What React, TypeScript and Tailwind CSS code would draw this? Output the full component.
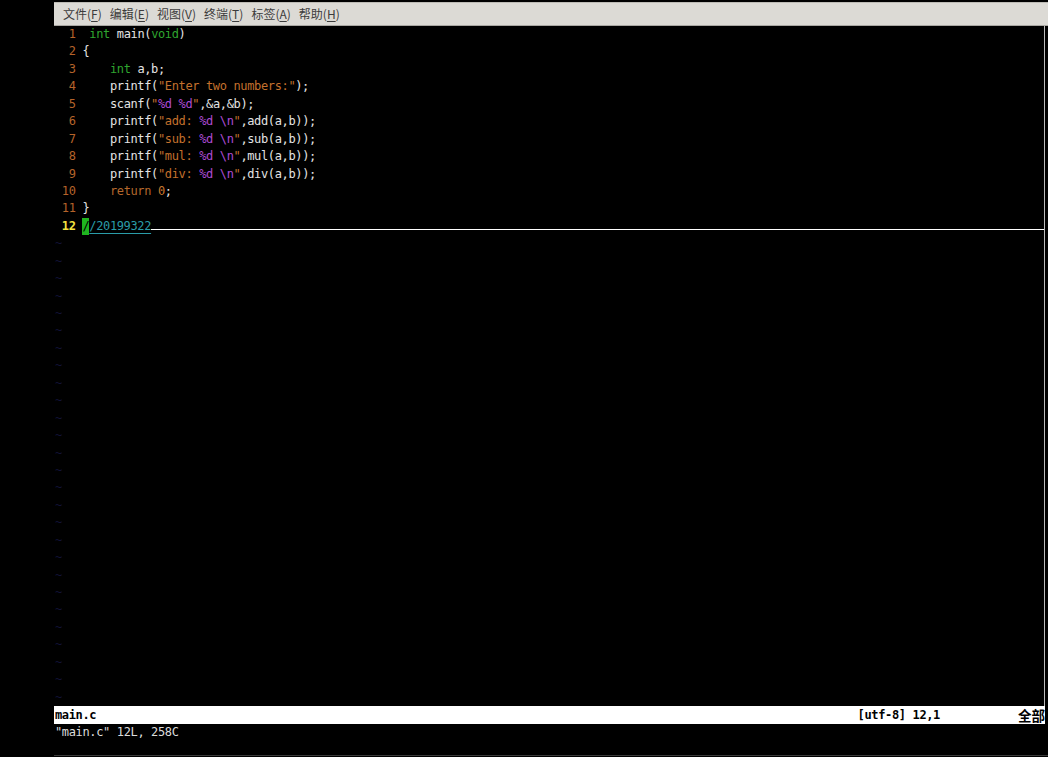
import React from 'react';

type Seg = [string, string];

const D = 'text-[#e4e4e4]';
const TYPE = 'text-[#2fa52f]';
const STR = 'text-[#c4712d]';
const FMT = 'text-[#ad4bd4]';
const STMT = 'text-[#b5682c]';
const NUM = 'text-[#c8782d]';

const fmtLine = (label: string, fn: string): Seg[] => [
    ['    printf(', D],
    [`"${label}: `, STR],
    ['%d', FMT],
    [' ', STR],
    ['\\n', FMT],
    ['"', STR],
    [`,${fn}(a,b));`, D],
];

const codeLines: Seg[][] = [
    [[' ', D], ['int', TYPE], [' main(', D], ['void', TYPE], [')', D]],
    [['{', D]],
    [['    ', D], ['int', TYPE], [' a,b;', D]],
    [['    printf(', D], ['"Enter two numbers:"', STR], [');', D]],
    [['    scanf(', D], ['"', STR], ['%d', FMT], [' ', STR], ['%d', FMT], ['"', STR], [',&a,&b);', D]],
    fmtLine('add', 'add'),
    fmtLine('sub', 'sub'),
    fmtLine('mul', 'mul'),
    fmtLine('div', 'div'),
    [['    ', D], ['return', STMT], [' ', D], ['0', NUM], [';', D]],
    [['}', D]],
];

const menus = [
    { id: '1', name: '文件', key: 'F' },
    { id: '2', name: '编辑', key: 'E' },
    { id: '3', name: '视图', key: 'V' },
    { id: '4', name: '终端', key: 'T' },
    { id: '5', name: '标签', key: 'A' },
    { id: '6', name: '帮助', key: 'H' },
];

// 144 columns of 6.86px each
const mono = "font-['DejaVu_Sans_Mono','Liberation_Mono','Noto_Sans_CJK_SC',monospace] text-[12px] tracking-[-0.36px]";

const Row = ({ children }: { children: React.ReactNode }) => (
    <div className="flex h-[17.44px] items-center whitespace-pre leading-[17.44px]">{children}</div>
);

const App = () => {
    return (
        <div className="flex h-[757px] w-[1048px] overflow-hidden bg-black">
            <div className="w-[54px] shrink-0" />
            <div className="flex flex-1 flex-col">
                <div className="h-[2px] shrink-0" />
                <div className="flex h-[24px] shrink-0 items-center gap-[8px] border-t border-b border-t-[#bdbbb5] border-b-[#a9a7a2] bg-[#dcdad5] pl-[9px] font-['Noto_Sans_CJK_SC','Noto_Sans',sans-serif] text-[12px] text-[#3c3c3c]">
                    {menus.map((item) => (
                        <span key={item.id} className="whitespace-pre">
                            {item.name}(<span className="underline underline-offset-2">{item.key}</span>)
                        </span>
                    ))}
                </div>
                <div className={`flex w-[991px] flex-col border-r border-r-[#bcbcbc] pl-[1px] ${mono}`}>
                    {codeLines.map((segs, i) => (
                        <Row key={i}>
                            <span className="w-[20.58px] text-right text-[#b5632a]">{i + 1}</span>
                            <span className="w-[6.86px]" />
                            {segs.map(([t, c], j) => (
                                <span key={j} className={c}>
                                    {t}
                                </span>
                            ))}
                        </Row>
                    ))}
                    <Row>
                        <span className="w-[20.58px] text-right font-bold text-[#f2e240]">12</span>
                        <span className="w-[6.86px]" />
                        <span className="flex h-full w-[6.86px] items-center bg-[#1fb51f] text-black">/</span>
                        <div className="flex h-full flex-1 items-center">
                            <span className="text-[#2a9ca8] underline decoration-[#2a9ca8] underline-offset-[3px]">/20199322</span>
                            <span className="mt-[6px] h-[1px] flex-1 self-center bg-white" />
                        </div>
                    </Row>
                    {Array.from({ length: 27 }).map((_, i) => (
                        <Row key={`t${i}`}>
                            <span className="text-[#121236]">~</span>
                        </Row>
                    ))}
                </div>
                <div className={`flex h-[17.44px] w-[991px] items-center bg-white pl-[1px] font-bold text-black ${mono}`}>
                    <span>main.c</span>
                    <span className="flex-1" />
                    <span className="whitespace-pre">[utf-8] 12,1</span>
                    <span className="w-[105px] text-right font-['Noto_Sans_CJK_SC',sans-serif] text-[13.5px] tracking-normal">全部</span>
                </div>
                <div className={`flex h-[17.44px] items-center whitespace-pre pl-[1px] text-[#dcdcdc] ${mono}`}>
                    "main.c" 12L, 258C
                </div>
                <div className="flex-1" />
                <div className="mb-[1px] h-[1px] bg-[#3a3a3a]" />
            </div>
        </div>
    );
};

export default App;
